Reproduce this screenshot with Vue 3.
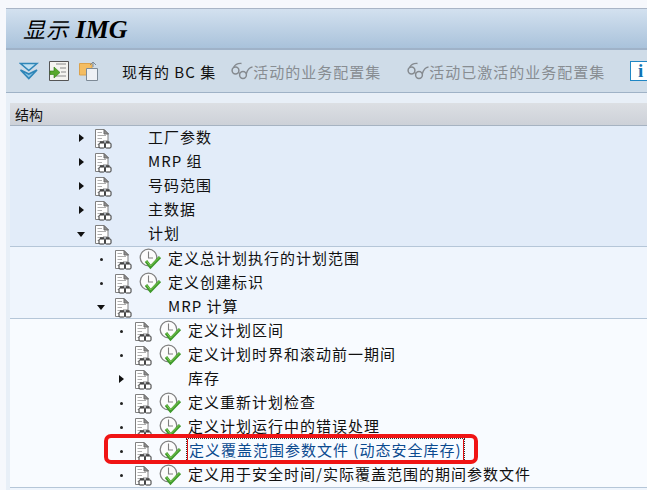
<template>
  <div class="page">
    <svg class="defs" width="0" height="0">
      <symbol id="doc" viewBox="0 0 18 22">
        <path d="M1.5 2.5H10L14 6.5V14H9V20.5H1.5Z" fill="#fff" stroke="#808080" />
        <path d="M10 2.5V7H14.5Z" fill="#8f8f8f" stroke="#6a6a6a" />
        <path d="M3.5 5.5H8M3.5 8.5H12M3.5 11.5H8M3.5 14.5H6M3.5 17.5H5" stroke="#b0b0b0" />
        <path d="M6 14H10V15.5H12V14H15.5V16H6Z" fill="#5c5c5c" />
        <rect x="5" y="16" width="5.6" height="5" rx="1" fill="#fff" stroke="#333" />
        <rect x="11.4" y="16" width="5.6" height="5" rx="1" fill="#fff" stroke="#333" />
      </symbol>
      <symbol id="clock" viewBox="0 0 22 22">
        <circle cx="9.5" cy="9.5" r="8.3" fill="#fcfcfc" stroke="#808080" stroke-width="1.3" />
        <path d="M9.5 3.5V10H14" fill="none" stroke="#808080" stroke-width="1.1" />
        <path d="M7 13L11.5 19L21 9" fill="none" stroke="#3f9a2c" stroke-width="3" />
        <path d="M7.5 13L11.5 18L20.5 9" fill="none" stroke="#8ad056" stroke-width="0.9" />
      </symbol>
      <symbol id="glasses" viewBox="0 0 22 20">
        <circle cx="4.5" cy="9.5" r="3.4" fill="none" stroke="#858a8f" stroke-width="1.5" />
        <circle cx="12" cy="14" r="3.4" fill="none" stroke="#858a8f" stroke-width="1.5" />
        <path d="M7.5 11.5L8.8 12.5M2.5 6.5Q5 2 10.5 2.5M15.3 13Q17 6.5 21.5 6" fill="none" stroke="#858a8f" stroke-width="1.3" />
      </symbol>
    </svg>

    <div class="title-bar">
      <span class="title"><i>显示</i> <b>IMG</b></span>
    </div>

    <div class="toolbar">
      <svg class="tool-icon" width="20" height="20" viewBox="0 0 20 20">
        <path d="M1.5 2.5H18L9.8 9.5Z" fill="#bfe0f2" stroke="#2f86b8" stroke-width="1.6" />
        <path d="M1.5 9L9.8 17.5L18 9L9.8 13Z" fill="#8cc4e4" stroke="#2f86b8" stroke-width="1.6" />
      </svg>
      <svg class="tool-icon" width="20" height="20" viewBox="0 0 20 20">
        <path d="M0.5 0.5H19.5V19.5H0.5Z" fill="#f4f4f0" stroke="#555" />
        <path d="M7 3H17M11 7H17M12 11H17M7 15H17" stroke="#8a8a8a" />
        <path d="M1 10H5V6L11 11.5L5 17V13.5H1Z" fill="#58a82c" stroke="#2f7a14" stroke-width="0.6" />
      </svg>
      <svg class="tool-icon" width="20" height="20" viewBox="0 0 20 20">
        <path d="M0.5 2.5H13V14H0.5Z" fill="#f4bd62" stroke="#dca24b" />
        <path d="M7.5 7.5H18.5V19.5H7.5Z" fill="#eef1f5" stroke="#7d8a96" />
        <path d="M11 4L14 1L17 4M14 1V6" fill="none" stroke="#7d8a96" />
      </svg>
      <span class="tool-sep"></span>
      <span class="tool-text">现有的 BC 集</span>
      <span class="tool-off first">
        <svg width="22" height="20"><use href="#glasses" /></svg>活动的业务配置集
      </span>
      <span class="tool-off second">
        <svg width="22" height="20"><use href="#glasses" /></svg>活动已激活的业务配置集
      </span>
      <span class="info">i</span>
    </div>

    <div class="panel">
      <div class="head">结构</div>
      <div class="tree level-0">
        <div v-for="item in topRows" :key="item.text" class="row">
          <span class="arrow" :class="item.open ? 'down' : 'right'"></span>
          <svg class="doc" width="18" height="22"><use href="#doc" /></svg>
          <span class="label plain">{{ item.text }}</span>
        </div>

        <div class="group level-1">
          <div v-for="item in midRows" :key="item.text" class="row">
            <span v-if="item.open" class="arrow down"></span>
            <span v-else class="dot"></span>
            <svg class="doc" width="18" height="22"><use href="#doc" /></svg>
            <svg v-if="!item.open" class="clock" width="22" height="22"><use href="#clock" /></svg>
            <span class="label" :class="{ plain: item.open }">{{ item.text }}</span>
          </div>

          <div class="group level-2">
            <div v-for="item in lowRows" :key="item.text" class="row">
              <span v-if="item.folder" class="arrow right"></span>
              <span v-else class="dot"></span>
              <svg class="doc" width="18" height="22"><use href="#doc" /></svg>
              <svg v-if="!item.folder" class="clock" width="22" height="22"><use href="#clock" /></svg>
              <span class="label" :class="{ plain: item.folder, focus: item.focus }">{{ item.text }}</span>
              <span v-if="item.focus" class="marker"></span>
            </div>
          </div>

          <div class="row">
            <span class="dot"></span>
            <svg class="doc" width="18" height="22"><use href="#doc" /></svg>
          </div>
        </div>
      </div>
    </div>
  </div>
</template>

<script setup>
const topRows = [
  { text: '工厂参数' },
  { text: 'MRP 组' },
  { text: '号码范围' },
  { text: '主数据' },
  { text: '计划', open: true }
]

const midRows = [
  { text: '定义总计划执行的计划范围' },
  { text: '定义创建标识' },
  { text: 'MRP 计算', open: true }
]

const lowRows = [
  { text: '定义计划区间' },
  { text: '定义计划时界和滚动前一期间' },
  { text: '库存', folder: true },
  { text: '定义重新计划检查' },
  { text: '定义计划运行中的错误处理' },
  { text: '定义覆盖范围参数文件 (动态安全库存)', focus: true },
  { text: '定义用于安全时间/实际覆盖范围的期间参数文件' }
]
</script>

<style scoped>
.page {
  width: 647px;
  height: 490px;
  overflow: hidden;
  box-sizing: border-box;
  padding: 8px 0 0 6px;
  background: #f6f8fc;
  font-family: "Noto Sans CJK SC", "Liberation Sans", sans-serif;
  font-size: 15px;
  letter-spacing: 1px;
  color: #111;
}
.defs {
  position: absolute;
}
.title-bar {
  height: 39px;
  display: flex;
  align-items: center;
  padding-left: 17px;
  border-top: 1px solid #a9b5c6;
  border-bottom: 2px solid #9fb2c8;
  background: linear-gradient(#d3e1ef, #a9c2db);
}
.title {
  font-family: "Liberation Serif", "Noto Sans CJK SC", serif;
  font-size: 26px;
  font-style: italic;
  letter-spacing: 0;
  color: #000;
  white-space: pre;
}
.title i {
  font-family: "Noto Sans CJK SC", sans-serif;
  font-size: 22px;
  letter-spacing: 1px;
}
.toolbar {
  height: 42px;
  display: flex;
  align-items: center;
  padding-left: 13px;
  white-space: nowrap;
  border-bottom: 1px solid #9fb2c6;
  background: #cfdce8;
}
.tool-icon {
  margin-right: 10px;
  flex: none;
}
.tool-sep {
  width: 1px;
  height: 20px;
  margin: 0 14px 0 -1px;
  background: #a9c3da;
}
.tool-off {
  display: flex;
  align-items: center;
  color: #888d92;
}
.tool-off.first {
  margin-left: 15px;
}
.tool-off.second {
  margin-left: 26px;
}
.info {
  flex: none;
  width: 20px;
  height: 18px;
  margin-left: 25px;
  border: 1px solid #1f86c4;
  background: #fff;
  color: #0f74b4;
  font: bold 19px/18px "Liberation Serif", serif;
  text-align: center;
}
.panel {
  height: 398px;
  padding: 10px 0 0 4px;
  background: #e8eff7;
}
.head {
  height: 22px;
  line-height: 22px;
  padding-left: 5px;
  font-size: 14px;
  letter-spacing: 0;
  border-bottom: 1px solid #a6b3c2;
  background: linear-gradient(#dcdfe3, #cdd1d8);
}
.tree {
  background: #e2ecf9;
}
.group {
  padding-left: 20px;
  border-top: 1px solid #b5c6d8;
}
.level-1 {
  background: #eff5fd;
}
.level-2 {
  margin-left: -20px;
  padding-left: 40px;
  margin-top: -1px;
  background: #f8fbff;
  border-bottom: 1px solid #b5c6d8;
}
.row {
  position: relative;
  height: 24px;
  display: flex;
  align-items: center;
  padding-left: 69px;
  white-space: nowrap;
}
.arrow.right {
  flex: none;
  border-left: 5px solid #111;
  border-top: 4px solid transparent;
  border-bottom: 4px solid transparent;
  margin-right: 10px;
}
.arrow.down {
  flex: none;
  border-top: 5px solid #111;
  border-left: 4px solid transparent;
  border-right: 4px solid transparent;
  margin-left: -2px;
  margin-right: 9px;
}
.dot {
  width: 3px;
  height: 3px;
  margin: 0 11px 0 1px;
  flex: none;
  border-radius: 50%;
  background: #222;
}
.doc {
  flex: none;
}
.clock {
  flex: none;
  margin-left: 7px;
}
.label {
  margin-left: 7px;
  padding-bottom: 3px;
}
.label.plain {
  margin-left: 36px;
}
.label.focus {
  color: #0b4a8f;
  margin-left: 6px;
  padding: 0 1px 1px;
  line-height: 21px;
  margin-bottom: 2px;
  outline: 1px dotted #333;
  border-right: 1px solid #e31010;
  border-left: 1px solid #e31010;
}
.marker {
  position: absolute;
  left: 54px;
  top: -5px;
  width: 366px;
  height: 22px;
  border: 4px solid #f01414;
  border-radius: 7px;
}
</style>
